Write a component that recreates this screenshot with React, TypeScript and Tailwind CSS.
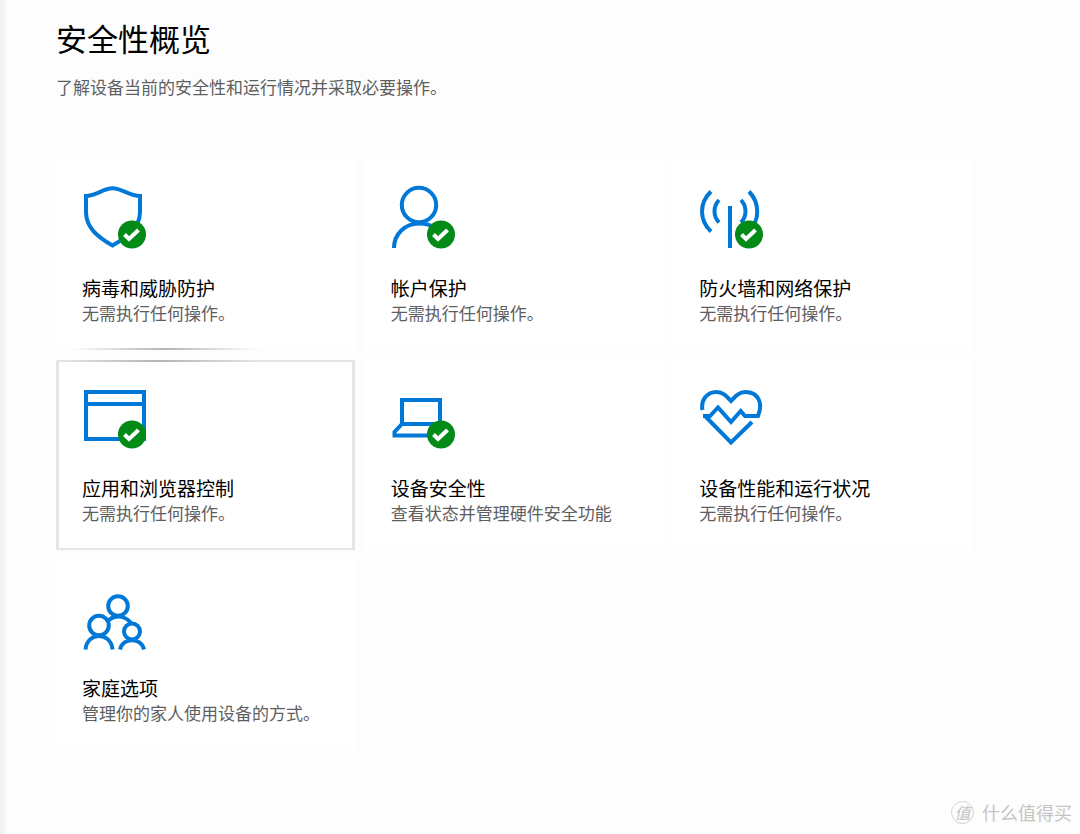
import { ReactNode } from "react"
import clsx from "clsx"

interface IArea {
    id: string
    title: string
    status: string
    icon: ReactNode
    checked?: boolean
}

const areas: IArea[] = [
    {
        id: "virus",
        title: "病毒和威胁防护",
        status: "无需执行任何操作。",
        checked: true,
        icon: <path d="M4 12C14 12 21 4.3 30.5 4.3S47 12 58 12V28C58 44 45 53 30.5 61.5C16 53 4 44 4 28Z" />,
    },
    {
        id: "account",
        title: "帐户保护",
        status: "无需执行任何操作。",
        checked: true,
        icon: (
            <>
                <circle cx="28" cy="21" r="17.2" />
                <path d="M3 64C3 50 14 39.5 28 39.5C35 39.5 40 41 44 44" />
            </>
        ),
    },
    {
        id: "firewall",
        title: "防火墙和网络保护",
        status: "无需执行任何操作。",
        checked: true,
        icon: (
            <>
                <path d="M31 22V64" />
                <path d="M12 7.5C0 19 0 36 12 47.5M20 16C14 22.5 14 32 20 38.5" />
                <path d="M50 7.5C61 19 61 36 50 47.5M42 16C48 22.5 48 32 42 38.5" />
            </>
        ),
    },
    {
        id: "browser",
        title: "应用和浏览器控制",
        status: "无需执行任何操作。",
        checked: true,
        icon: <path d="M4 8H62V55H4ZM4 20H62" />,
    },
    {
        id: "device",
        title: "设备安全性",
        status: "查看状态并管理硬件安全功能",
        checked: true,
        icon: <path d="M11 40V16H49V40H11L3.5 48V51.5H50" />,
    },
    {
        id: "health",
        title: "设备性能和运行状况",
        status: "无需执行任何操作。",
        icon: (
            <>
                <path d="M3.5 26C1.5 16 8 8 17.5 8C24 8 27.5 12 32 17C36.5 12 40 8 46.500 8C59 8 64.5 19 59 32H46L41.7 27L32 38L19 23.500L11 32H4" />
                <path d="M6 32L32 58.5L53 38" />
            </>
        ),
    },
    {
        id: "family",
        title: "家庭选项",
        status: "管理你的家人使用设备的方式。",
        icon: (
            <>
                <circle cx="36" cy="22" r="9.8" />
                <circle cx="17" cy="41.5" r="9.8" />
                <circle cx="50" cy="47.5" r="8" />
                <path d="M27 36C32 31.5 42 30.5 49 39" />
                <path d="M3.500 65.5C5 47.5 29 47.5 30.5 65.5" />
                <path d="M38 65.5C41 53 59 53 62 65.5" />
            </>
        ),
    },
]

function AreaIcon({ icon, checked }: { icon: ReactNode, checked?: boolean }) {
    return (
        <svg viewBox="0 0 66 66" className="size-[66px]" fill="none" stroke="#0078d7" strokeWidth="4" aria-hidden="true">
            {icon}
            {checked && (
                <>
                    <circle cx="50" cy="50.5" r="14" fill="#048a17" stroke="none" />
                    <path d="M42.500 50.5L47 55L56.5 46" stroke="#fff" />
                </>
            )}
        </svg>
    )
}

function AreaCard({ area, hovered, nearPointer }: { area: IArea, hovered: boolean, nearPointer: boolean }) {
    return (
        <button
            type="button"
            className={clsx(
                "relative flex flex-col items-start border-x-3 border-y-2 bg-white px-[23px] pt-[22px] pb-[22px] text-left",
                hovered ? "border-[#e5e5e5]" : "border-white"
            )}>
            <AreaIcon icon={area.icon} checked={area.checked} />
            <span className="mt-[26px] text-[19px] leading-[24px] text-black">{area.title}</span>
            <span className="text-[17px] leading-[26px] text-[#5e5e5e]">{area.status}</span>
            {hovered && <span className="absolute -top-[2px] left-0 h-[2px] w-[200px] bg-linear-to-r from-transparent via-[#b4b4b4] to-transparent" />}
            {nearPointer && <span className="absolute -bottom-[2px] left-[12px] h-[2px] w-[188px] bg-linear-to-r from-transparent via-[#b4b4b4] to-transparent" />}
        </button>
    )
}

export default function App() {
    return (
        <div className="flex min-h-screen flex-col border-l-[5px] border-[#f3f3f3] bg-[#fdfdfd] font-['Noto_Sans_CJK_SC',sans-serif]">
            <main className="pt-[18px] pr-6 pl-[51px]">
                <h1 className="text-[31px] leading-[40px] text-black">安全性概览</h1>
                <p className="mt-[17px] text-[17px] leading-[24px] text-[#5e5e5e]">了解设备当前的安全性和运行情况并采取必要操作。</p>
                <div className="mt-[61px] grid max-w-[916px] grid-cols-3 gap-[10px]">
                    {areas.map((area) => (
                        <AreaCard key={area.id} area={area} hovered={area.id === "browser"} nearPointer={area.id === "virus"} />
                    ))}
                </div>
            </main>
            <footer className="mt-auto flex items-center justify-end gap-2 pr-2 pb-[10px] text-[#c4c4c4]">
                <span className="flex size-[23px] items-center justify-center rounded-full border border-[#d4d4d4] text-[16px] leading-none italic">值</span>
                <span className="text-[18px] leading-[24px]">什么值得买</span>
            </footer>
        </div>
    )
}
